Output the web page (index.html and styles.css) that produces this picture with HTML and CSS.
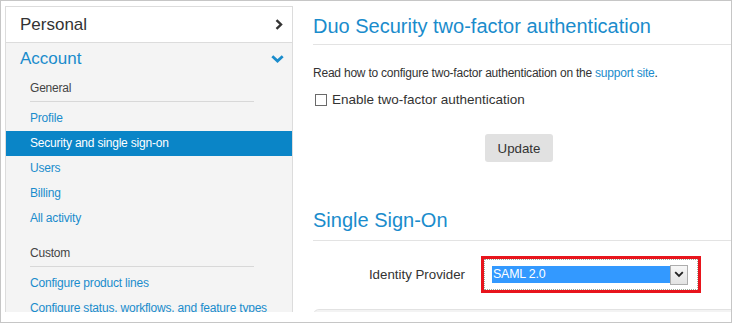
FILE: index.html
```html
<!DOCTYPE html>
<html>
<head>
<meta charset="utf-8">
<link rel="stylesheet" href="styles.css">
</head>
<body>
<div class="frame">
  <div class="viewport">
    <nav class="sidebar">
      <div class="nav-top">
        <span>Personal</span>
        <svg class="chev-right" width="8" height="11" viewBox="0 0 8 11"><polyline points="1.5,1.2 6,5.5 1.5,9.8" fill="none" stroke="#333" stroke-width="2.4"/></svg>
      </div>
      <div class="nav-section">
        <div class="nav-head">
          <span>Account</span>
          <svg class="chev-down" width="13" height="8" viewBox="0 0 13 8"><polyline points="1.3,1.3 6.5,6 11.7,1.3" fill="none" stroke="#1a8ccc" stroke-width="2.8"/></svg>
        </div>
        <div class="group-label">General</div>
        <ul class="links">
          <li>Profile</li>
          <li class="active">Security and single sign-on</li>
          <li>Users</li>
          <li>Billing</li>
          <li>All activity</li>
        </ul>
        <div class="group-label custom">Custom</div>
        <ul class="links">
          <li>Configure product lines</li>
          <li>Configure status, workflows, and feature types</li>
        </ul>
      </div>
    </nav>
    <main class="content">
      <h2 class="title">Duo Security two-factor authentication</h2>
      <p class="read">Read how to configure two-factor authentication on the <span class="link">support site</span>.</p>
      <div class="check-row"><span class="checkbox"></span>Enable two-factor authentication</div>
      <button class="btn">Update</button>
      <h2 class="title sso">Single Sign-On</h2>
      <div class="idp-row">
        <div class="idp-label">Identity Provider</div>
        <div class="highlight">
          <div class="select">
            <div class="sel-value">SAML 2.0</div>
            <div class="sel-arrow">
              <svg width="10" height="7" viewBox="0 0 10 7"><polyline points="1.2,1.2 5,5 8.8,1.2" fill="none" stroke="#222" stroke-width="1.8"/></svg>
            </div>
          </div>
        </div>
      </div>
      <div class="panel"></div>
    </main>
  </div>
</div>
</body>
</html>
```
FILE: styles.css
```css
* { box-sizing: border-box; }
body {
  margin: 0;
  background: #fff;
  font-family: "Liberation Sans", Arial, sans-serif;
}
.frame {
  width: 732px;
  height: 323px;
  border: 1px solid #c6c6c6;
  padding-bottom: 10px;
  background: #fff;
}
.viewport {
  height: 311px;
  overflow: hidden;
  display: flex;
}
.sidebar {
  width: 288px;
  flex-shrink: 0;
  margin: 5px 0 0 4px;
  border: 1px solid #dcdcdc;
  border-bottom: none;
  background: #f4f4f4;
}
.nav-top {
  height: 36px;
  background: #fff;
  border-bottom: 1px solid #dcdcdc;
  display: flex;
  align-items: center;
  justify-content: space-between;
  padding: 0 9px 0 14px;
  font-size: 17px;
  color: #333;
}
.nav-head {
  height: 31px;
  display: flex;
  align-items: center;
  justify-content: space-between;
  padding: 0 8px 0 14px;
  font-size: 17px;
  color: #1a8ccc;
}
.chev-down { margin-top: 1px; }
.group-label {
  margin-left: 24px;
  width: 224px;
  font-size: 12px;
  letter-spacing: -0.2px;
  line-height: 16px;
  padding: 6px 0 5px;
  color: #444;
  border-bottom: 1px solid #d8d8d8;
}
.group-label.custom { margin-top: 8px; }
.links {
  list-style: none;
  margin: 4px 0 0;
  padding: 0;
}
.links li {
  height: 25px;
  line-height: 25px;
  padding-left: 24px;
  font-size: 12px;
  letter-spacing: -0.2px;
  color: #1a8ccc;
  white-space: nowrap;
}
.links li.active {
  background: #0a85c7;
  color: #fff;
}
.content {
  flex: 1;
  padding-left: 20px;
}
.title {
  margin: 0;
  padding: 13px 0 6px;
  font-size: 20px;
  line-height: 24px;
  font-weight: normal;
  color: #1a8ccc;
  border-bottom: 1px solid #e3e3e3;
}
.title.sso {
  margin-top: 46px;
  padding: 0 0 8px;
}
.read {
  margin: 21px 0 0;
  font-size: 12px;
  letter-spacing: -0.22px;
  line-height: 14px;
  color: #333;
}
.link { color: #1a8ccc; }
.check-row {
  margin-top: 12px;
  font-size: 13.5px;
  line-height: 16px;
  color: #333;
  display: flex;
  align-items: center;
}
.checkbox {
  width: 12px;
  height: 12px;
  border: 1px solid #6a6a6a;
  background: #fff;
  margin: 0 5px 0 2px;
}
.btn {
  display: block;
  margin: 26px 0 0 172px;
  width: 68px;
  height: 28px;
  border: none;
  border-radius: 3px;
  background: #e1e1e1;
  font-family: "Liberation Sans", Arial, sans-serif;
  font-size: 13.3px;
  color: #333;
  padding: 0;
}
.idp-row {
  margin-top: 15px;
  display: flex;
  align-items: center;
  gap: 16px;
}
.idp-label {
  width: 152px;
  text-align: right;
  font-size: 13.3px;
  color: #333;
}
.highlight {
  width: 220px;
  height: 37px;
  border: 3px solid #e8141c;
}
.select {
  height: 100%;
  display: flex;
  align-items: center;
  padding: 0 8px 0 7px;
  border: 1px dotted #9aa89a;
  background: #fff;
}
.sel-value {
  width: 178px;
  height: 17px;
  line-height: 17px;
  padding-left: 1px;
  background: #3399ff;
  color: #fff;
  font-size: 12.4px;
  letter-spacing: -0.2px;
}
.sel-arrow {
  width: 18px;
  height: 20px;
  border: 1px solid #adadad;
  background: linear-gradient(#f7f7f7, #e3e3e3);
  display: flex;
  align-items: center;
  justify-content: center;
}
.panel {
  margin-top: 16px;
  height: 20px;
  background: #f3f3f3;
  border-top: 1px solid #e2e2e2;
  border-left: 1px solid #e8e8e8;
  border-top-left-radius: 6px;
}
```
